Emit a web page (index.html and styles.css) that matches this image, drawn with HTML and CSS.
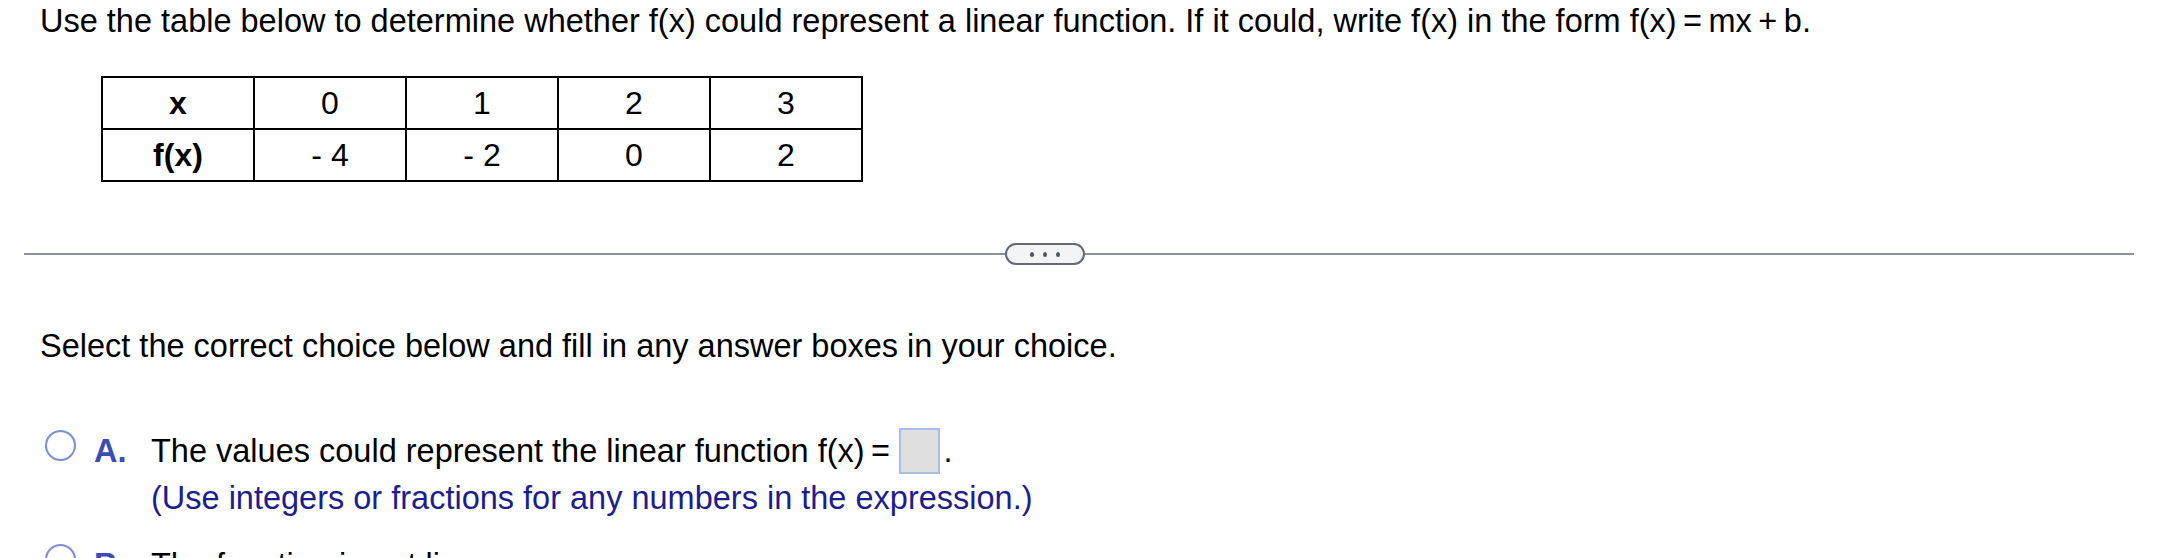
FILE: index.html
```html
<!DOCTYPE html>
<html lang="en">
<head>
<meta charset="utf-8">
<title>Linear function table</title>
<link rel="stylesheet" href="styles.css">
</head>
<body>
<div class="page">
  <p class="prompt">Use the table below to determine whether f(x) could represent a linear function. If it could, write f(x) in the form f(x)&thinsp;=&thinsp;mx&thinsp;+&thinsp;b.</p>
  <table class="values">
    <tr>
      <th>x</th><td>0</td><td>1</td><td>2</td><td>3</td>
    </tr>
    <tr>
      <th>f(x)</th><td>- 4</td><td>- 2</td><td>0</td><td>2</td>
    </tr>
  </table>
  <div class="divider">
    <div class="rule rule-left"></div>
    <div class="pill"><span class="dot"></span><span class="dot"></span><span class="dot"></span></div>
    <div class="rule rule-right"></div>
  </div>
  <p class="instruction">Select the correct choice below and fill in any answer boxes in your choice.</p>
  <div class="option">
    <span class="radio"></span>
    <span class="letter">A.</span>
    <div class="body">
      <div class="line">The values could represent the linear function f(x)&thinsp;=&thinsp;<span class="answer"></span>.</div>
      <div class="line hint">(Use integers or fractions for any numbers in the expression.)</div>
    </div>
  </div>
  <div class="option">
    <span class="radio"></span>
    <span class="letter">B.</span>
    <div class="body">
      <div class="line">The function is not linear.</div>
    </div>
  </div>
</div>
</body>
</html>
```
FILE: styles.css
```css
html, body {
  margin: 0;
  padding: 0;
  background: #ffffff;
}
body {
  font-family: "Liberation Sans", Arial, sans-serif;
  font-size: 32.5px;
  color: #000000;
  overflow: hidden;
}
.page {
  padding: 1px 26px 0 24px;
}
.prompt {
  margin: 0;
  padding-left: 16px;
  line-height: 40px;
  white-space: nowrap;
}
.values {
  margin: 35px 0 0 77px;
  border-collapse: collapse;
  table-layout: fixed;
  width: 761px;
}
.values th,
.values td {
  border: 2px solid #000000;
  width: 150px;
  height: 50px;
  padding: 0;
  text-align: center;
  vertical-align: middle;
  line-height: 36px;
  font-size: 32px;
}
.values th {
  font-weight: bold;
}
.divider {
  display: flex;
  align-items: center;
  margin-top: 61px;
  height: 22px;
}
.rule {
  height: 2px;
  background: #8d919b;
}
.rule-left {
  flex: 0 0 981px;
}
.rule-right {
  flex: 1 1 auto;
}
.pill {
  box-sizing: border-box;
  width: 80px;
  height: 22px;
  border: 2px solid #636a74;
  border-radius: 11px;
  background: #f3f4f6;
  display: flex;
  align-items: center;
  justify-content: center;
  gap: 9px;
}
.dot {
  width: 4px;
  height: 5px;
  border-radius: 50%;
  background: #4d5561;
}
.instruction {
  margin: 61px 0 0;
  padding-left: 16px;
  line-height: 40px;
}
.option {
  display: flex;
  align-items: flex-start;
  margin-top: 62px;
  padding-left: 21px;
  line-height: 47px;
}
.option + .option {
  margin-top: 20px;
}
.radio {
  box-sizing: border-box;
  flex: 0 0 auto;
  width: 31px;
  height: 31px;
  margin-top: 2px;
  border: 2px solid #7d90d3;
  border-radius: 50%;
  background: #ffffff;
  box-shadow: inset 0 0 1px #b9c4ea;
}
.letter {
  flex: 0 0 auto;
  margin-left: 18px;
  width: 57px;
  font-weight: bold;
  color: #3a4db3;
}
.body {
  flex: 1 1 auto;
}
.line {
  white-space: nowrap;
}
.hint {
  color: #1d1d8c;
}
.answer {
  display: inline-block;
  box-sizing: border-box;
  width: 41px;
  height: 46px;
  vertical-align: -12px;
  border: 2px solid #a7bfe6;
  background: #dfdfdf;
  margin-left: 2px;
  margin-right: 4px;
}
```
